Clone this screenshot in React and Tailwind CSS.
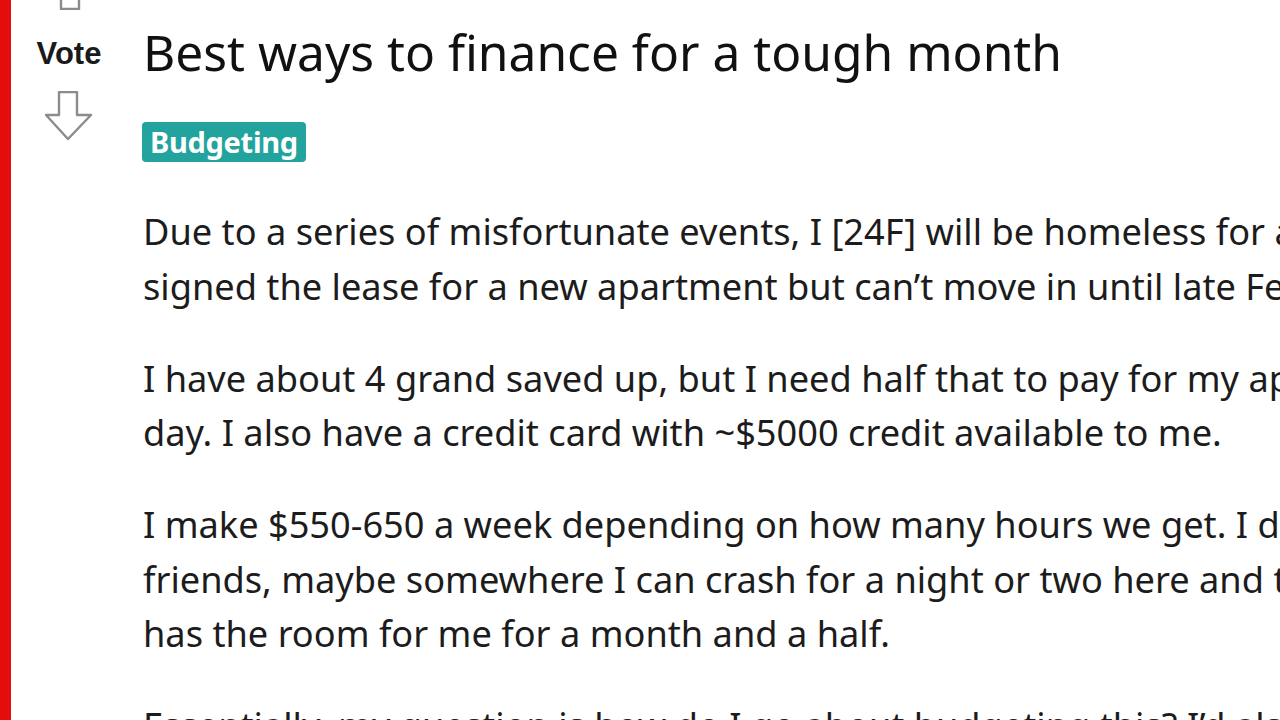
import React from 'react';

const paragraphs = [
  [
    'Due to a series of misfortunate events, I [24F] will be homeless for a month and a half. I',
    'signed the lease for a new apartment but can\u2019t move in until late February.',
  ],
  [
    'I have about 4 grand saved up, but I need half that to pay for my apartment on move in',
    'day. I also have a credit card with ~$5000 credit available to me.',
  ],
  [
    'I make $550-650 a week depending on how many hours we get. I don\u2019t have family, and a few',
    'friends, maybe somewhere I can crash for a night or two here and there, but nobody',
    'has the room for me for a month and a half.',
  ],
  [
    'Essentially, my question is how do I go about budgeting this? I\u2019d also appreciate any tips.',
  ],
];

function Arrow({ up }) {
  return (
    <svg width="48" height="50" viewBox="0 0 48 50" fill="none" className={up ? 'rotate-180' : ''}>
      <path
        d="M14 1 H32 V24 H46 L23 48 L1 24 H14 Z"
        stroke="#8a8c8e"
        strokeWidth="2.4"
        strokeLinejoin="round"
      />
    </svg>
  );
}

export default function App() {
  return (
    <div className="h-[720px] w-[1280px] overflow-hidden flex bg-white">
      <div className="w-[11px] shrink-0 bg-[#e50c0c]" />

      {/* vote column */}
      <div className="w-[116px] shrink-0 flex flex-col items-center -mt-[40px]">
        <Arrow up />
        <p className="mt-[28px] text-[31px] leading-none font-bold text-[#1a1a1b] font-['Liberation_Sans',Arial,sans-serif]">
          Vote
        </p>
        <div className="mt-[22px]">
          <Arrow />
        </div>
      </div>

      {/* post */}
      <div className="ml-[16px] flex-1 min-w-0 font-['Noto_Sans',sans-serif] text-[#1c1c1c]">
        <h1 className="mt-[22px] text-[49.7px] leading-[60px] font-normal text-[#111] whitespace-nowrap">
          Best ways to finance for a tough month
        </h1>
        <span className="mt-[40px] -ml-px inline-block h-[40px] px-[8px] rounded-[4px] bg-[#22a39d] text-white text-[29px] tracking-[-0.3px] font-bold leading-[40px]">
          Budgeting
        </span>
        <div className="mt-[42px] flex flex-col gap-[37.5px] text-[36.2px] leading-[54.5px]">
          {paragraphs.map((lines, i) => (
            <div key={i}>
              {lines.map((l, j) => (
                <p key={j} className="whitespace-nowrap">{l}</p>
              ))}
            </div>
          ))}
        </div>
      </div>
    </div>
  );
}
